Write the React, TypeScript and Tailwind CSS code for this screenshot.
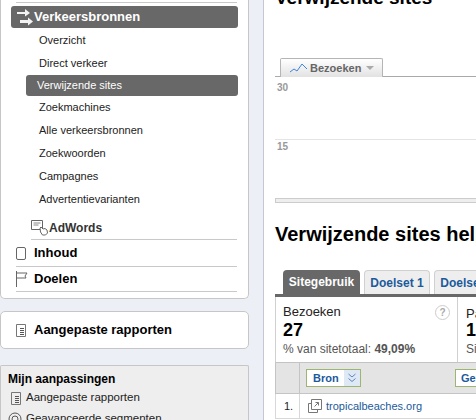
import {ReactNode} from "react";

const subItems = ["Overzicht", "Direct verkeer", "Verwijzende sites", "Zoekmachines", "Alle verkeersbronnen", "Zoekwoorden", "Campagnes", "Advertentievarianten"]

const ReportIcon = ()=>{
    return <svg width="10" height="13" viewBox="0 0 10 13" fill="none" stroke="#777" className="shrink-0">
        <path d="M.5.5h9v12h-9z"/>
        <path d="M4 4.500h4M4 6.500h4M4 8.500h4M4 10.500h4" stroke="#555"/>
    </svg>
}

const SectionRow = ({icon, label, line}: {icon: ReactNode, label: string, line: string})=>{
    return <div className={"flex items-center ml-[15px] mr-[11px] border-b border-[#c9c9c9] "+line}>
        <div className="w-[18px] shrink-0 flex items-center">{icon}</div>
        <span className="text-[13px] font-bold text-black">{label}</span>
    </div>
}

const Sidebar = ()=>{
    return <div className="w-[264px] shrink-0 border-r border-[#c4c8d0]">
        <div className="w-[249px] h-[299px] bg-white border border-t-0 border-[#c6c6c6] rounded-b-[5px] pt-[2px] flex flex-col">
            <div className="ml-[15px] mr-[11px] h-px bg-[#c9c9c9] shrink-0"/>
            <div className="ml-[10px] mr-[10px] mt-[3px] h-[22px] rounded-[3px] bg-[#686868] flex items-center shrink-0">
                <svg width="18" height="17" viewBox="0 0 18 17" fill="#f4f4f4" className="ml-[5px] shrink-0">
                    <path d="M1 3h8V0l5 4-5 3.500V5H1z"/>
                    <path d="M4 11h8V8.500l5 4-5 4V14H4z"/>
                </svg>
                <span className="text-[13px] font-bold text-white">Verkeersbronnen</span>
            </div>
            <div className="flex flex-col mt-[1px] text-[11px] text-[#222]">
                {subItems.map((item)=>{
                    return item === "Verwijzende sites"
                        ? <div key={item} className="ml-[25px] mr-[10px] h-[21px] pl-[11px] rounded-[3px] bg-[#686868] text-white flex items-center">{item}</div>
                        : <div key={item} className="ml-[38px] h-[23px] flex items-center">{item}</div>
                })}
            </div>
            <div className="ml-[30px] mr-[11px] mt-[5px] h-[24px] border-b border-[#c9c9c9] flex items-center">
                <svg width="18" height="17" viewBox="0 0 18 17" fill="none" stroke="#666" className="shrink-0">
                    <path d="M.5 1.500h11v9h-11z"/>
                    <path d="M2.500 4h7M2.500 6h5" stroke="#888"/>
                    <path d="M9 9l1-1 2 2 2-.5 2 1.500.5 3-2 2h-3l-2-3z" fill="#fff"/>
                </svg>
                <span className="text-xs font-bold text-[#333]">AdWords</span>
            </div>
            <SectionRow line="h-[27px]" label="Inhoud" icon={<div className="w-[10px] h-[13px] rounded-[2px] border border-[#666]"/>}/>
            <SectionRow line="h-[25px]" label="Doelen" icon={
                <svg width="12" height="16" viewBox="0 0 12 16" fill="none" stroke="#666">
                    <path d="M.5 0v16M.5 2h10.500l-2 3 1 2H.5"/>
                </svg>
            }/>
        </div>
        <div className="w-[249px] h-[38px] mt-[12px] bg-white border border-[#c6c6c6] rounded-[5px] pl-[15px] flex items-center">
            <div className="w-[18px]"><ReportIcon/></div>
            <span className="text-[13px] font-bold text-black">Aangepaste rapporten</span>
        </div>
        <div className="w-[249px] h-[60px] mt-[16px] bg-[#eeeeee] border border-b-0 border-[#c6c6c6] rounded-t-[2px] pl-[7px] pt-[6px]">
            <div className="text-xs font-bold text-black leading-[15px]">Mijn aanpassingen</div>
            <div className="flex items-center mt-[2px] h-[18px] pl-[3px] text-[11.500px] text-[#222]">
                <div className="w-[15px]"><ReportIcon/></div>
                <span>Aangepaste rapporten</span>
            </div>
            <div className="flex items-center mt-[3px] h-[18px] text-[11.500px] text-[#222]">
                <div className="w-[18px]">
                    <svg width="14" height="14" viewBox="0 0 14 14" fill="none" stroke="#555">
                        <circle cx="7" cy="7" r="6"/>
                        <circle cx="7" cy="7" r="3"/>
                    </svg>
                </div>
                <span>Geavanceerde segmenten</span>
            </div>
        </div>
    </div>
}

const Main = ()=>{
    return <div className="flex-1 min-w-0 bg-white pl-[11px] overflow-hidden">
        <h1 className="text-[19px] font-bold text-black leading-[22px] -mt-[13px] whitespace-nowrap">Verwijzende sites</h1>
        <div className="h-[68px] border-b border-[#aaaaaa] flex items-end pl-[5px]">
            <div className="w-[103px] h-[19px] -mb-px border border-b-0 border-[#b5b5b5] rounded-t-[2px] bg-gradient-to-b from-white to-[#e2e2e2] flex items-center pl-[9px] shrink-0">
                <svg width="18" height="10" viewBox="0 0 18 10" fill="none" stroke="#3b86d8" className="shrink-0">
                    <path d="M0 9l4-3 3 2 5-7 5 5"/>
                </svg>
                <span className="text-[11px] font-bold text-[#666] ml-[2px]">Bezoeken</span>
                <span className="ml-[5px] w-0 h-0 border-x-[4px] border-x-transparent border-t-[4px] border-t-[#aaaaaa]"/>
            </div>
        </div>
        <div className="h-[63px] border-b border-[#e4e4e4] pl-[2px] pt-[5px] text-[10px] font-bold text-[#999] leading-[12px]">30</div>
        <div className="h-[58px] pl-[2px] pt-[1px] text-[10px] font-bold text-[#999] leading-[12px]">15</div>
        <div className="h-[5px] bg-[#eeeeee] border-y border-l border-[#cccccc]"/>
        <h2 className="text-[20px] font-bold text-black leading-[22px] mt-[20px] whitespace-nowrap">Verwijzende sites helpen</h2>
        <div className="flex items-end h-[24px] mt-[25px] pl-2 gap-[4px] whitespace-nowrap">
            <div className="w-[77px] h-[24px] rounded-t-[4px] bg-[#686868] text-white text-xs font-bold flex items-center justify-center shrink-0">Sitegebruik</div>
            <div className="w-[66px] h-[24px] rounded-t-[4px] bg-[#eeeeee] border border-b-0 border-[#d0d0d0] text-[#1c5a9c] text-xs font-bold flex items-center justify-center shrink-0">Doelset 1</div>
            <div className="w-[66px] h-[24px] rounded-t-[4px] bg-[#eeeeee] border border-b-0 border-[#d0d0d0] text-[#1c5a9c] text-xs font-bold flex items-center justify-center shrink-0">Doelset 2</div>
        </div>
        <div className="h-[3px] bg-[#686868]"/>
        <div className="flex h-[65px] border-l border-[#d0d0d0] whitespace-nowrap">
            <div className="w-[182px] shrink-0 pl-[7px] pr-[7px] pt-[7px] border-r border-[#d0d0d0]">
                <div className="flex items-center justify-between h-[16px]">
                    <span className="text-[13px] text-[#222]">Bezoeken</span>
                    <span className="w-[15px] h-[15px] rounded-full border border-[#cccccc] text-[#aaaaaa] text-[10px] font-bold flex items-center justify-center">?</span>
                </div>
                <div className="text-lg font-bold text-black leading-[20px]">27</div>
                <div className="text-xs text-[#555] leading-[15px] mt-[2px]">% van sitetotaal: <b>49,09%</b></div>
            </div>
            <div className="pl-2 pt-[7px]">
                <div className="text-[13px] text-[#222] h-[16px]">Pagina's</div>
                <div className="text-lg font-bold text-black leading-[20px]">1</div>
                <div className="text-xs text-[#555] leading-[15px] mt-[2px]">Site</div>
            </div>
        </div>
        <div className="flex h-[32px] bg-[#e4e4e4] border-y border-l border-[#c4c4c4] whitespace-nowrap">
            <div className="w-[24px] shrink-0 border-r border-[#c4c4c4]"/>
            <div className="flex-1 flex items-center pl-[6px]">
                <div className="w-[55px] h-[18px] border border-[#9cb56f] bg-white flex items-center shrink-0">
                    <span className="text-[11px] font-bold text-[#1c5a9c] pl-[6px] w-[37px]">Bron</span>
                    <span className="flex-1 h-full bg-[#dfe9f5] flex items-center justify-center">
                        <svg width="8" height="10" viewBox="0 0 8 10" fill="none" stroke="#5a86b8">
                            <path d="M.5 1l3.500 3 3.500-3M.5 5.500l3.500 3 3.500-3"/>
                        </svg>
                    </span>
                </div>
                <div className="ml-[94px] w-[40px] h-[18px] border border-[#9cb56f] bg-white text-[11px] font-bold text-[#1c5a9c] pl-[5px] flex items-center shrink-0">Ge</div>
            </div>
        </div>
        <div className="flex h-[25px] border-b border-l border-[#d8d8d8] whitespace-nowrap">
            <div className="w-[24px] shrink-0 border-r border-[#d8d8d8] pl-[8px] text-[11px] text-[#222] flex items-center">1.</div>
            <div className="flex items-center pl-[8px]">
                <svg width="14" height="14" viewBox="0 0 14 14" fill="none" stroke="#777" className="shrink-0">
                    <path d="M3.500 4.500h-3v9h9v-3"/>
                    <path d="M3.500.5h10v10h-10z"/>
                    <path d="M6.500 7.500l4-4M7.500 3.500h3v3"/>
                </svg>
                <span className="ml-[4px] text-[11px] text-[#1c5a9c]">tropicalbeaches.org</span>
            </div>
        </div>
    </div>
}

export default function App(){
    return <div className="w-[476px] h-[420px] overflow-hidden flex bg-[#eceff5]" style={{fontFamily: '"Liberation Sans", Arial, sans-serif'}}>
        <Sidebar/>
        <Main/>
    </div>
}
